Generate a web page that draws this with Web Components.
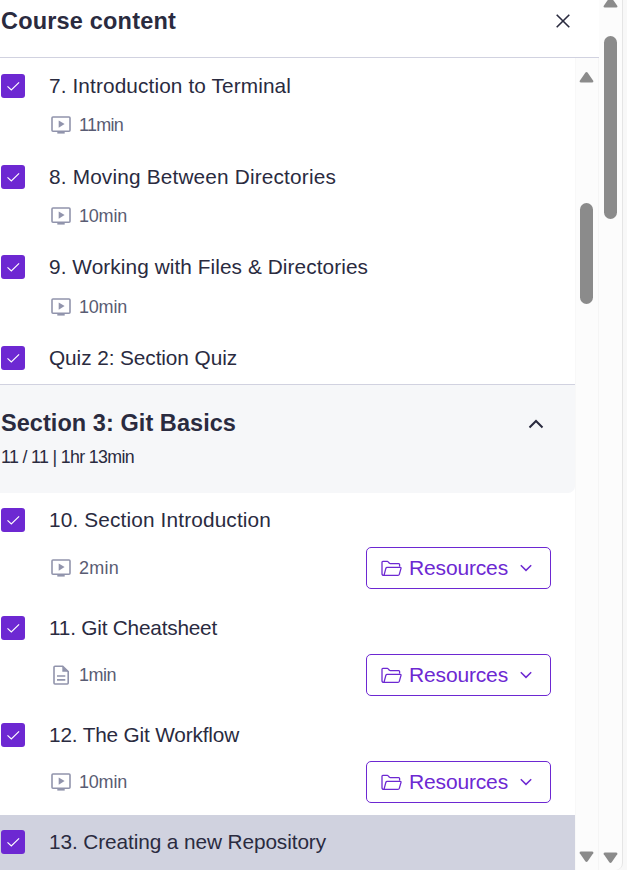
<!DOCTYPE html>
<html lang="en"><head><meta charset="utf-8"><title>Course content</title>
<style>
html,body{margin:0;height:100%;overflow:hidden;background:#fff}
body{font-family:"Liberation Sans",Arial,sans-serif;color:#2a2b3f}
</style></head><body>
<course-page></course-page>
<script>
const define=(name,html,init)=>{
  const t=document.createElement('template');t.innerHTML=html;
  customElements.define(name,class extends HTMLElement{
    connectedCallback(){
      if(this.shadowRoot)return;
      this.attachShadow({mode:'open'}).append(t.content.cloneNode(true));
      if(init)init(this,this.shadowRoot);
    }
  });
};
// A single line of text tracked so that it fills the given width.
define('fit-text',`<style>:host{display:block;white-space:nowrap}span{display:inline-block}</style><span></span>`,(el,r)=>{
  const s=r.querySelector('span');s.textContent=el.getAttribute('text');
  const w=s.getBoundingClientRect().width;
  s.style.letterSpacing=((+el.getAttribute('width')-w)/s.textContent.length)+'px';
});
const icons={
  check:'<svg width="24" height="24" fill="none" stroke="#fff" stroke-width="1.15"><path d="M6.5 12.3l3.8 3.7 7.8-7.7"/></svg>',
  close:'<svg width="16" height="16" fill="none" stroke="#2a2b3f" stroke-width="1.6"><path d="M1.7 1.7l12.6 12.6M14.3 1.7L1.7 14.3"/></svg>',
  up:'<svg width="16" height="10" fill="none" stroke="#2a2b3f" stroke-width="2"><path d="M1.5 8.5L8 2l6.5 6.5"/></svg>',
  down:'<svg width="12" height="8" fill="none" stroke="#6d28d2" stroke-width="1.5"><path d="M.8 1.2L6 6.4l5.2-5.2"/></svg>',
  video:'<svg width="20" height="20" fill="none" stroke="#9194ac" stroke-width="1.6"><rect x="1" y="2" width="18" height="14.2" rx="1"/><path d="M7.7 5.5v7.2l5.9-3.6z" fill="#9194ac" stroke="none"/><path d="M6.3 16.5h7.4v2.1H6.3z" fill="#9194ac" stroke="none"/></svg>',
  doc:'<svg width="20" height="20" fill="none" stroke="#9194ac" stroke-width="1.6"><path d="M4 1.2h7.7L17.2 6.7v11.3q0 1-1 1H4q-1 0-1-1V2.2q0-1 1-1zM6 11h8.3M6 14.9h8.3"/><path d="M11.3 1v5.8h5.8z" fill="#9194ac" stroke="none"/></svg>',
  folder:'<svg width="21" height="17" fill="none" stroke="#6d28d2" stroke-width="1.3"><path d="M2.8 15.4Q1 15.4 1 13.8V2.3q0-.9.9-.9h4.4q.5 0 .9.5l1.2 1.3q.4.5.9.5h8.4q.9 0 .9.9v1.8M3 15.4l1.9-7.2q.3-.9 1.2-.9h13q1.2 0 .9 1.1l-1.7 6q-.3 1-1.3 1z"/></svg>'
};
define('ui-icon',`<style>:host{display:block;flex:none;line-height:0}svg{display:block}</style>`,(el,r)=>r.append(document.createRange().createContextualFragment(icons[el.getAttribute('name')])));
define('check-box',`<style>:host{display:block;width:24px;height:24px;border-radius:3px;background:#6d28d2;flex:none}</style><ui-icon name="check"></ui-icon>`);
define('resource-button',`<style>:host{display:block}button{all:unset;box-sizing:border-box;width:185px;height:42px;border:1px solid #6d28d2;border-radius:5px;display:flex;align-items:center;padding:0 14px;color:#6d28d2;font-size:21px;line-height:24px}
fit-text{width:99px;margin:0 12px 0 7px}</style><button><ui-icon name="folder"></ui-icon><fit-text text="Resources" width="99"></fit-text><ui-icon name="down"></ui-icon></button>`);
define('lecture-row',`<style>:host{display:block;box-sizing:border-box}
.row{display:flex;gap:24px;padding-left:1px}.main{flex:1}.title{font-size:20.8px;line-height:24px}
.meta{display:flex;justify-content:space-between;padding:0 24px 0 2px}
.time{display:flex;gap:8px;align-items:center;height:20px;font-size:18px;line-height:20px;color:#595c73}
</style><div class="row"><check-box></check-box><div class="main"><fit-text class="title"></fit-text><div class="meta"></div></div></div>`,(el,r)=>{
  const a=n=>el.getAttribute(n),m=r.querySelector('.meta'),t=r.querySelector('.title');
  el.style.height=a('h')+'px';el.style.paddingTop=a('pad')+'px';
  const f=document.createElement('fit-text');f.className='title';f.setAttribute('text',a('label'));f.setAttribute('width',a('w'));t.replaceWith(f);
  if(a('time')){
    m.style.marginTop=a('gap')+'px';
    m.innerHTML=`<div class="time" style="padding-top:${a('drop')||0}px"><ui-icon name="${a('icon')||'video'}"></ui-icon><fit-text text="${a('time')}" width="${a('tw')}"></fit-text></div>`+(el.hasAttribute('res')?'<resource-button></resource-button>':'');
  }
});
define('section-header',`<style>:host{display:flex;box-sizing:border-box;height:109px;border-top:1px solid #d1d2e0;background:#f6f7f9;border-radius:0 0 7px 0;justify-content:space-between;padding:24px 31px 0 1px}
.t{font-size:23.5px;font-weight:700;line-height:28px}.s{font-size:17.8px;line-height:20px;margin-top:10px}ui-icon{margin-top:10px}</style>
<div><fit-text class="t" text="Section 3: Git Basics" width="235"></fit-text><fit-text class="s" text="11 / 11 | 1hr 13min" width="133"></fit-text></div><ui-icon name="up"></ui-icon>`);
define('scroll-bar',`<style>:host{display:flex;flex-direction:column;align-items:center;box-sizing:border-box;background:#fcfcfc}
.thumb{width:13px;border-radius:7px;background:#8b8b8b}svg{display:block;flex:none}.fill{flex:1}</style>
<svg class="a" width="15" height="13"><path d="M6.3 1.8q1.2-1.5 2.4 0l5.5 8q.8 1.7-1 1.7H1.8q-1.8 0-1-1.7z" fill="#8b8b8b"/></svg><div class="thumb"></div><div class="fill"></div><svg class="b" width="15" height="13"><path d="M6.3 11.2q1.2 1.5 2.4 0l5.5-8q.8-1.7-1-1.7H1.8q-1.8 0-1 1.7z" fill="#8b8b8b"/></svg>`,(el,r)=>{
  const a=n=>el.getAttribute(n)+'px';
  r.querySelector('.a').style.marginTop=a('top');
  const t=r.querySelector('.thumb');t.style.marginTop=a('gap');t.style.height=a('size');
  r.querySelector('.b').style.marginBottom=a('bottom');
});
define('panel-header',`<style>:host{display:flex;box-sizing:border-box;height:58px;border-bottom:1px solid #d1d2e0;justify-content:space-between;padding:7px 28px 0 1px;font-size:23.5px;font-weight:700;line-height:28px}ui-icon{margin-top:6px}</style><fit-text text="Course content" width="175"></fit-text><ui-icon name="close"></ui-icon>`);
define('course-page',`<style>:host{display:flex;width:627px;height:870px;background:#f8f8f8}
.panel{width:599px;background:#fff}.body{display:flex;height:812px}.list{width:575px;overflow:hidden}
.inner{width:24px;border-left:1px solid #f8f8f8;border-right:1px solid #f5f5f5;padding-right:1px}
.outer{width:24px;border-right:1px solid #e5e5e5;border-radius:0 0 7px 0}
.selected{background:#d0d2df}</style>
<div class="panel"><panel-header></panel-header><div class="body"><div class="list">
<lecture-row h="91" pad="16" label="7. Introduction to Terminal" w="242" gap="17" time="11min" tw="44"></lecture-row>
<lecture-row h="90" pad="16" label="8. Moving Between Directories" w="287" gap="17" time="10min" tw="48"></lecture-row>
<lecture-row h="91" pad="16" label="9. Working with Files &amp; Directories" w="319" gap="18" time="10min" tw="48"></lecture-row>
<lecture-row h="54" pad="16" label="Quiz 2: Section Quiz" w="188"></lecture-row>
<section-header></section-header>
<lecture-row h="108" pad="15" label="10. Section Introduction" w="222" gap="15" time="2min" tw="40" drop="11" res></lecture-row>
<lecture-row h="107" pad="15" label="11. Git Cheatsheet" w="168" gap="14" icon="doc" time="1min" tw="37" drop="11" res></lecture-row>
<lecture-row h="107" pad="15" label="12. The Git Workflow" w="190" gap="14" time="10min" tw="48" drop="11" res></lecture-row>
<lecture-row class="selected" h="55" pad="15" label="13. Creating a new Repository" w="277"></lecture-row>
</div><scroll-bar class="inner" top="13" gap="119" size="101" bottom="7"></scroll-bar></div></div>
<scroll-bar class="outer" top="-4" gap="27" size="183" bottom="6"></scroll-bar>`);
</script></body></html>
